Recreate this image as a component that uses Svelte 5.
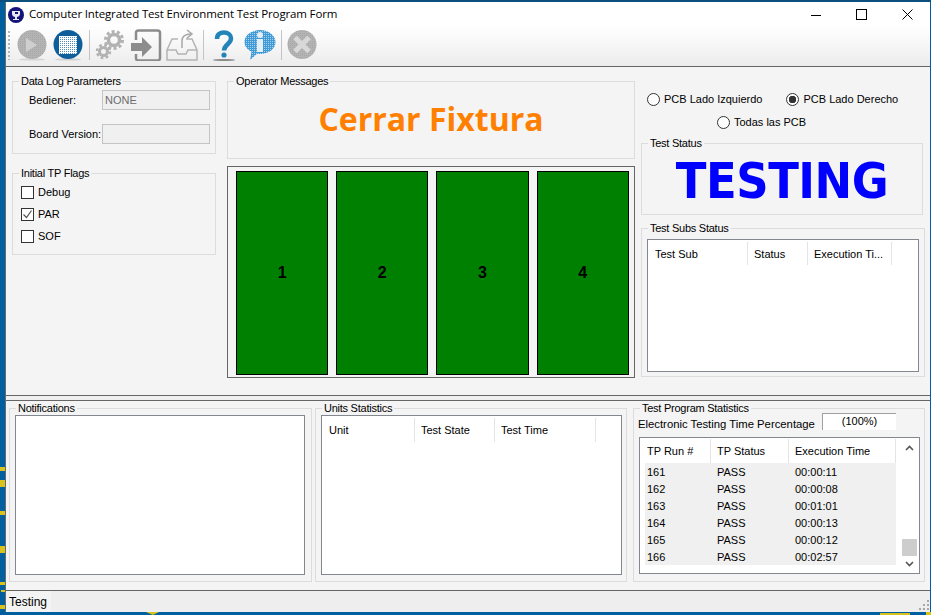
<script>
    const flags = [
        { name: 'Debug', checked: false },
        { name: 'PAR', checked: true },
        { name: 'SOF', checked: false }
    ];

    const fixtures = [1, 2, 3, 4];

    const runs = [
        { id: 161, status: 'PASS', time: '00:00:11' },
        { id: 162, status: 'PASS', time: '00:00:08' },
        { id: 163, status: 'PASS', time: '00:01:01' },
        { id: 164, status: 'PASS', time: '00:00:13' },
        { id: 165, status: 'PASS', time: '00:00:12' },
        { id: 166, status: 'PASS', time: '00:02:57' }
    ];

    // desktop wallpaper bits showing around the window
    const marks = [
        [0, 467, 5, 4], [0, 480, 5, 7], [0, 511, 5, 4], [0, 546, 5, 7],
        [0, 582, 5, 3], [0, 605, 5, 4], [1, 590, 4, 2], [926, 612, 5, 3], [880, 613, 30, 2]
    ];
</script>

<svg class="wallpaper" width="931" height="615" aria-hidden="true">
    {#each marks as m}
        <rect x={m[0]} y={m[1]} width={m[2]} height={m[3]} fill="#d8c31e" />
    {/each}
    <path d="M146 612h13l-6 3z" fill="#d8c31e" />
    <rect x="0" y="0" width="931" height="2" fill="#0b4f7c" />
</svg>

<div class="window">
    <header class="titlebar">
        <svg class="app-icon" width="16" height="16" viewBox="0 0 16 16">
            <circle cx="8" cy="8" r="8" fill="#14147a" />
            <path d="M4 4h8v3c0 2-2 3-3 3v2h2v1H5v-1h2v-2C6 10 4 9 4 7z" fill="#e8e8f4" />
            <path d="M7 5h3v2H7z" fill="#14147a" />
        </svg>
        <span class="title">Computer Integrated Test Environment Test Program Form</span>
        <div class="controls">
            <span class="ctl"><svg width="10" height="10"><path d="M0 5.5h10" stroke="#000" /></svg></span>
            <span class="ctl"><svg width="11" height="11"><rect x=".5" y=".5" width="10" height="10" fill="none" stroke="#000" /></svg></span>
            <span class="ctl"><svg width="11" height="11"><path d="M.5.5l10 10M10.500.5l-10 10" stroke="#000" /></svg></span>
        </div>
    </header>

    <nav class="toolbar">
        <svg width="0" height="0" class="defs">
            <defs>
                <pattern id="dots" width="2" height="2" patternUnits="userSpaceOnUse">
                    <rect width="2" height="2" fill="#fff" />
                    <rect width="1" height="1" fill="#4f8cc0" />
                </pattern>
                <pattern id="grain" width="2" height="2" patternUnits="userSpaceOnUse">
                    <rect width="2" height="2" fill="#b4b4b4" />
                    <rect width="1" height="1" fill="#a6a6a6" />
                </pattern>
                <pattern id="bubble" width="2" height="2" patternUnits="userSpaceOnUse">
                    <rect width="2" height="2" fill="#3f9ad6" />
                    <rect width="1" height="1" fill="#a9d2ee" />
                </pattern>
            </defs>
        </svg>
        <span class="grip"></span>

        <!-- play -->
        <svg class="tool" width="32" height="32" viewBox="0 0 32 32">
            <ellipse cx="16" cy="30.500" rx="13" ry="1" fill="#d4d4d4" />
            <circle cx="16" cy="15.500" r="14.500" fill="url(#grain)" />
            <path d="M10 9l11 7-11 7z" fill="#cfcfcf" />
        </svg>

        <!-- stop -->
        <svg class="tool" width="32" height="32" viewBox="0 0 32 32">
            <ellipse cx="16" cy="30.500" rx="13" ry="1" fill="#cfcfcf" />
            <circle cx="16" cy="15.500" r="14.500" fill="#0e5e9c" />
            <rect x="7" y="7" width="18" height="18" fill="url(#dots)" />
        </svg>

        <span class="sep"></span>

        <!-- gears -->
        <svg class="tool" width="32" height="32" viewBox="0 0 32 32">
            <g fill="none" stroke="#b2b2b2">
                <circle cx="20" cy="11" r="5.500" stroke-width="3.500" />
                <circle cx="20" cy="11" r="8.500" stroke-width="3" stroke-dasharray="3 2.340" />
                <circle cx="9.500" cy="22.500" r="4" stroke-width="3" />
                <circle cx="9.500" cy="22.500" r="6.500" stroke-width="2.500" stroke-dasharray="2.600 2.500" />
            </g>
        </svg>

        <!-- login arrow -->
        <svg class="tool" width="32" height="32" viewBox="0 0 32 32">
            <path d="M6 11V4a2.500 2.500 0 0 1 2.500-2.500h19A2.500 2.500 0 0 1 30 4v25a2.500 2.500 0 0 1-2.500 2.500h-19A2.500 2.500 0 0 1 6 29v-4" fill="none" stroke="#8c8c8c" stroke-width="2.500" />
            <path d="M1 14h11V8l10 10-10 10v-6H1z" fill="#8c8c8c" />
        </svg>

        <!-- outbox tray -->
        <svg class="tool" width="32" height="32" viewBox="0 0 32 32">
            <g fill="none" stroke="#b4b4b4" stroke-width="1.500">
                <path d="M1 21v10h30V21l-5-11h-6M12 10H6L1 21h9l2 4h8l2-4h9" />
                <path d="M16 19v-7c0-4 3-7 9-7" stroke="#a8a8a8" />
                <path d="M21 1l5 4-5 4" stroke="#a8a8a8" />
            </g>
        </svg>

        <span class="sep"></span>

        <!-- help -->
        <svg class="tool" width="32" height="32" viewBox="0 0 32 32">
            <path d="M9 10c0-4.500 3-6.500 7-6.500s7 2.500 7 6c0 5.500-7 6-7 12" fill="none" stroke="#2384b8" stroke-width="4.500" />
            <circle cx="16" cy="26" r="2.600" fill="#2384b8" />
            <ellipse cx="16" cy="31" rx="11" ry="1" fill="#8a8a8a" />
        </svg>

        <!-- info bubble -->
        <svg class="tool" width="32" height="32" viewBox="0 0 32 32">
            <path d="M16 1c8.500 0 15.500 5 15.500 12S24.500 25 16 25c-1 0-2 0-3-.2L6 31l1.500-8.500C3 20.500.500 17 .500 13 .500 6 7.500 1 16 1z" fill="url(#bubble)" />
            <rect x="13" y="10" width="6" height="13" fill="#e4eef6" />
            <circle cx="16" cy="6" r="3" fill="#e4eef6" />
        </svg>

        <span class="sep"></span>

        <!-- cancel -->
        <svg class="tool" width="32" height="32" viewBox="0 0 32 32">
            <circle cx="16" cy="15.500" r="14.500" fill="url(#grain)" />
            <path d="M9 8.500l14 14M23 8.500l-14 14" stroke="#d8d8d8" stroke-width="5" />
        </svg>
    </nav>

    <main class="upper">
        <section class="col-left">
            <fieldset class="log">
                <legend>Data Log Parameters</legend>
                <div class="log-grid">
                    <span>Bediener:</span>
                    <div class="readonly">NONE</div>
                    <span>Board Version:</span>
                    <div class="readonly"></div>
                </div>
            </fieldset>

            <fieldset class="flags">
                <legend>Initial TP Flags</legend>
                <div class="flag-list">
                    {#each flags as flag}
                        <label class="flag">
                            <span class="box">
                                {#if flag.checked}
                                    <svg width="11" height="11" viewBox="0 0 11 11"><path d="M1.500 5.500l3 3 5-7" fill="none" stroke="#555" stroke-width="1.200" /></svg>
                                {/if}
                            </span>
                            {flag.name}
                        </label>
                    {/each}
                </div>
            </fieldset>
        </section>

        <section class="col-mid">
            <fieldset class="operator">
                <legend>Operator Messages</legend>
                <div class="message">Cerrar Fixtura</div>
            </fieldset>
            <div class="fixtures">
                {#each fixtures as n}
                    <div class="fixture">{n}</div>
                {/each}
            </div>
        </section>

        <section class="col-right">
            <div class="radios">
                <label class="radio"><input type="radio" name="pcb" />PCB Lado Izquierdo</label>
                <label class="radio"><input type="radio" name="pcb" checked />PCB Lado Derecho</label>
            </div>
            <div class="radios second">
                <label class="radio"><input type="radio" name="pcb" />Todas las PCB</label>
            </div>

            <fieldset class="status">
                <legend>Test Status</legend>
                <div class="testing">TESTING</div>
            </fieldset>

            <fieldset class="subs">
                <legend>Test Subs Status</legend>
                <div class="list subs-list">
                    <div class="head">
                        <span style="width: 100px">Test Sub</span>
                        <span style="width: 60px">Status</span>
                        <span style="width: 84px">Execution Ti...</span>
                    </div>
                </div>
            </fieldset>
        </section>
    </main>

    <div class="splitter"></div>

    <section class="lower">
        <fieldset class="notes">
            <legend>Notifications</legend>
            <div class="list notes-list"></div>
        </fieldset>

        <fieldset class="units">
            <legend>Units Statistics</legend>
            <div class="list units-list">
                <div class="head">
                    <span style="width: 93px">Unit</span>
                    <span style="width: 80px">Test State</span>
                    <span style="width: 101px">Test Time</span>
                </div>
            </div>
        </fieldset>

        <fieldset class="stats">
            <legend>Test Program Statistics</legend>
            <div class="percent-row">
                <span>Electronic Testing Time Percentage</span>
                <div class="percent">(100%)</div>
            </div>
            <div class="list stats-list">
                <div class="stats-table">
                    <div class="head">
                        <span style="width: 66px">TP Run #</span>
                        <span style="width: 78px">TP Status</span>
                        <span style="width: 107px">Execution Time</span>
                    </div>
                    {#each runs as run}
                        <div class="row">
                            <span style="width: 65px">{run.id}</span>
                            <span style="width: 78px">{run.status}</span>
                            <span style="width: 108px">{run.time}</span>
                        </div>
                    {/each}
                </div>
                <div class="scrollbar">
                    <svg width="15" height="17" viewBox="0 0 15 17"><path d="M4 11l3.500-3.500L11 11" fill="none" stroke="#555" stroke-width="1.600" /></svg>
                    <div class="track"></div>
                    <div class="thumb"></div>
                    <svg width="15" height="17" viewBox="0 0 15 17"><path d="M4 6l3.500 3.500L11 6" fill="none" stroke="#555" stroke-width="1.600" /></svg>
                </div>
            </div>
        </fieldset>
    </section>

    <footer class="statusbar">
        <span class="status-label">Testing</span>
        <svg class="resize" width="12" height="12" viewBox="0 0 12 12">
            <g fill="#a8a8a8">
                <rect x="9" y="1" width="2" height="2" />
                <rect x="5" y="5" width="2" height="2" /><rect x="9" y="5" width="2" height="2" />
                <rect x="1" y="9" width="2" height="2" /><rect x="5" y="9" width="2" height="2" /><rect x="9" y="9" width="2" height="2" />
            </g>
        </svg>
    </footer>
</div>

<style>
    :global(body) {
        background-color: #00609f;
        height: 615px;
        overflow: hidden;
    }

    .wallpaper {
        position: absolute;
        top: 0;
        left: 0;
    }

    .window {
        position: relative;
        box-sizing: border-box;
        width: 925px;
        height: 610px;
        margin: 2px 0 0 5px;
        display: flex;
        flex-direction: column;
        background-color: #f4f4f4;
        border-left: 1px solid #6a6a6a;
        font-family: "Liberation Sans", Arial, sans-serif;
        font-size: 11px;
        line-height: 14px;
        color: #000;
    }

    /* Title bar */
    .titlebar {
        height: 22px;
        flex: none;
        display: flex;
        align-items: center;
        background-color: #fff;
        padding-left: 2px;
    }

    .app-icon {
        margin-right: 5px;
        margin-top: 3px;
    }

    .title {
        margin-top: 2px;
        font-family: "Open Sans", sans-serif;
        font-size: 11.500px;
        letter-spacing: -0.150px;
        white-space: nowrap;
    }

    .controls {
        margin-left: auto;
        display: flex;
        margin-top: 3px;
    }

    .ctl {
        width: 45.500px;
        height: 22px;
        display: flex;
        align-items: center;
        justify-content: center;
    }

    /* Toolbar */
    .toolbar {
        height: 43px;
        flex: none;
        box-sizing: border-box;
        display: flex;
        align-items: center;
        gap: 4px;
        padding-left: 2px;
        background: linear-gradient(#fff 0, #fdfdfd 15%, #ececec 100%);
        border-bottom: 1px solid #666;
    }

    .defs {
        position: absolute;
    }

    .grip {
        width: 2px;
        height: 29px;
        margin-right: 2px;
        background: repeating-linear-gradient(#b5b5b5 0 2px, transparent 2px 4px);
    }

    .tool {
        flex: none;
    }

    .sep {
        width: 1px;
        height: 30px;
        margin-left: 1px;
        background-color: #c4c4c4;
    }

    /* Upper panel */
    .upper {
        height: 329px;
        flex: none;
        box-sizing: border-box;
        display: flex;
        padding: 7px 0 0 6px;
        border-bottom: 1px solid #666;
    }

    fieldset {
        box-sizing: border-box;
        margin: 0;
        padding: 0;
        min-width: 0;
        border: 1px solid #dcdcdc;
    }

    legend {
        margin-left: 6px;
        padding: 0 2px;
        line-height: 14px;
        letter-spacing: -0.250px;
    }

    .col-left {
        width: 204px;
        margin-right: 11px;
        display: flex;
        flex-direction: column;
        gap: 12px;
    }

    .log {
        height: 80px;
    }

    .log-grid {
        display: grid;
        grid-template-columns: 73px 108px;
        grid-auto-rows: 20px;
        row-gap: 14px;
        align-items: center;
        padding: 2px 0 0 16px;
        white-space: nowrap;
    }

    .readonly {
        box-sizing: border-box;
        height: 20px;
        padding: 2px 2px;
        background-color: #f0f0f0;
        border: 1px solid #c4c4c4;
        color: #6d6d6d;
    }

    .flags {
        height: 89px;
    }

    .flag-list {
        padding: 1px 0 0 8px;
    }

    .flag {
        display: flex;
        align-items: center;
        gap: 4px;
        height: 22px;
    }

    .box {
        box-sizing: border-box;
        width: 13px;
        height: 13px;
        display: flex;
        background-color: #fff;
        border: 1px solid #333;
    }

    .col-mid {
        width: 408px;
        margin-right: 6px;
        display: flex;
        flex-direction: column;
        gap: 7px;
    }

    .operator {
        height: 85px;
    }

    .message {
        margin-top: 11px;
        text-align: center;
        font-family: "Open Sans", sans-serif;
        font-weight: 700;
        font-size: 32px;
        line-height: 40px;
        color: #ff8000;
    }

    .fixtures {
        box-sizing: border-box;
        height: 212px;
        display: grid;
        grid-template-columns: repeat(4, 1fr);
        gap: 8px;
        padding: 4px 5.200px 2px 8px;
        border: 1px solid #666;
    }

    .fixture {
        display: flex;
        align-items: center;
        justify-content: center;
        background-color: #008000;
        border: 1px solid #000;
        font-weight: 700;
        font-size: 16px;
    }

    .col-right {
        width: 284px;
        padding-top: 18px;
    }

    .radios {
        display: flex;
        gap: 24px;
        padding-left: 6px;
        height: 14px;
    }

    .radios.second {
        margin-top: 9px;
        padding-left: 76px;
    }

    .radio {
        display: flex;
        align-items: center;
        gap: 4px;
        white-space: nowrap;
    }

    .radio input {
        appearance: none;
        box-sizing: border-box;
        width: 13px;
        height: 13px;
        margin: 0;
        border: 1px solid #333;
        border-radius: 50%;
        background-color: #fff;
    }

    .radio input:checked {
        background: radial-gradient(circle, #333 0 3.500px, #fff 4px);
    }

    .status {
        width: 282px;
        height: 79px;
        margin-top: 7px;
    }

    .testing {
        margin-top: 3px;
        text-align: center;
        font-family: "DejaVu Sans", sans-serif;
        font-stretch: condensed;
        font-weight: 700;
        font-size: 50px;
        line-height: 56px;
        letter-spacing: -0.500px;
        color: #0000ff;
    }

    .subs {
        height: 156px;
        margin-top: 6px;
    }

    .list {
        box-sizing: border-box;
        background-color: #fff;
        border: 1px solid #828790;
    }

    .subs-list {
        width: 272px;
        height: 133px;
        margin: 4px 0 0 5px;
        padding-top: 2px;
    }

    .subs-list .head {
        height: 23px;
    }

    .head {
        display: flex;
        height: 24px;
        background-color: #fff;
    }

    .head span {
        box-sizing: border-box;
        display: flex;
        align-items: center;
        padding-left: 7px;
        border-right: 1px solid #e4e4e4;
        white-space: nowrap;
    }

    .head span + span {
        padding-left: 6px;
    }

    .splitter {
        height: 4px;
        flex: none;
        background-color: #f0f0f0;
        border-bottom: 1px solid #666;
        box-sizing: content-box;
    }

    /* Lower panel */
    .lower {
        height: 189px;
        flex: none;
        box-sizing: border-box;
        display: flex;
        padding-left: 3px;
    }

    .notes {
        width: 303px;
        height: 181px;
        margin-right: 3px;
    }

    .notes-list {
        width: 290px;
        height: 160px;
        margin-left: 5px;
    }

    .units {
        width: 312px;
        height: 181px;
        margin-right: 6px;
    }

    .units-list {
        width: 301px;
        height: 160px;
        margin-left: 5px;
        padding-top: 2px;
    }

    .stats {
        width: 292px;
        height: 181px;
    }

    .percent-row {
        display: flex;
        height: 18px;
        margin: -2px 0 0 4px;
    }

    .percent-row span {
        width: 184px;
        margin-top: 4px;
        font-size: 11.300px;
        white-space: nowrap;
    }

    .percent {
        box-sizing: border-box;
        width: 74px;
        height: 17px;
        line-height: 15px;
        text-align: center;
        background-color: #fff;
        border-top: 1px solid #a0a0a0;
        border-left: 1px solid #a0a0a0;
    }

    .stats-list {
        display: flex;
        width: 281px;
        height: 137px;
        margin: 6px 0 0 5px;
        padding: 1px 2px 0 5px;
    }

    .stats-table {
        width: 251px;
    }

    .row {
        display: flex;
        height: 17px;
        align-items: center;
        background-color: #f0f0f0;
    }

    .row span {
        box-sizing: border-box;
        padding-left: 2px;
    }

    .row span + span {
        padding-left: 7px;
    }

    .stats-table .head span:first-child {
        padding-left: 2px;
    }

    .scrollbar {
        width: 15px;
        margin-left: 6px;
        display: flex;
        flex-direction: column;
    }

    .track {
        flex: 1;
    }

    .thumb {
        height: 17px;
        background-color: #cdcdcd;
    }

    /* Status bar */
    .statusbar {
        height: 22px;
        flex: none;
        box-sizing: border-box;
        display: flex;
        align-items: stretch;
        justify-content: space-between;
        background-color: #eee;
        border-top: 1px solid #666;
    }

    .status-label {
        display: flex;
        align-items: center;
        padding: 0 4px 0 3px;
        font-size: 12px;
        background-color: #f3f3f3;
    }

    .resize {
        align-self: flex-end;
        margin-bottom: 1px;
    }
</style>
